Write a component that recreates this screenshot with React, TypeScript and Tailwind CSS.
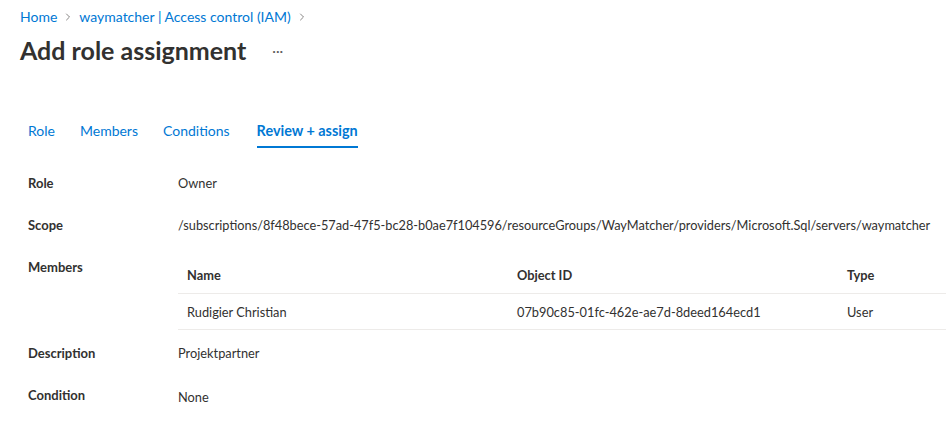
import { ChevronRight } from "lucide-react";

const font = { fontFamily: 'Lato, "Noto Sans", sans-serif' };

function Crumb({ text }: { text: string }) {
  return (
    <>
      <span className="text-[#0078d4]">{text}</span>
      <ChevronRight className="mx-[5px] h-3 w-3 text-[#605e5c]" strokeWidth={1.5} />
    </>
  );
}

function Row({ label, children, className = "" }: { label: string; children: React.ReactNode; className?: string }) {
  return (
    <div className={`flex ${className}`}>
      <div className="w-[150px] shrink-0 text-[13px] font-bold text-[#323130]">{label}</div>
      <div className="flex-1 min-w-0">{children}</div>
    </div>
  );
}

export default function App() {
  const tabs = ["Role", "Members", "Conditions", "Review + assign"];

  return (
    <div className="h-[437px] w-[946px] overflow-hidden bg-white text-[12.8px] text-[#323130]" style={font}>
      {/* Breadcrumb */}
      <div className="flex items-center pl-5 pt-[8px] text-[14px] leading-[18px]">
        <Crumb text="Home" />
        <Crumb text="waymatcher | Access control (IAM)" />
      </div>

      {/* Title */}
      <div className="flex items-center pl-5 pt-[8px]">
        <h1 className="text-[25px] font-bold leading-[32px] text-[#323130]">Add role assignment</h1>
        <span className="ml-[26px] text-[14px] text-[#605e5c]">···</span>
      </div>

      {/* Tabs */}
      <div className="mt-[55px] flex pl-[28px] text-[14px]">
        {tabs.map((t, i) => {
          const active = i === tabs.length - 1;
          return (
            <div
              key={t}
              className={`mr-[25px] border-b-2 pb-[5px] leading-[20px] text-[#0078d4] ${active ? "ml-[2px] border-[#0078d4] font-bold text-[14.4px]" : "border-transparent"}`}
            >
              {t}
            </div>
          );
        })}
      </div>

      {/* Details */}
      <div className="mt-[26px] pl-[28px] leading-[18px]">
        <Row label="Role">Owner</Row>
        <Row label="Scope" className="mt-[24px]">
          <span className="whitespace-nowrap text-[12.75px]">
            /subscriptions/8f48bece-57ad-47f5-bc28-b0ae7f104596/resourceGroups/WayMatcher/providers/Microsoft.Sql/servers/waymatcher
          </span>
        </Row>
        <Row label="Members" className="mt-[24px]">
          <div>
            <div className="flex border-b border-[#edebe9] pb-[9px] pt-[8px] font-bold">
              <div className="w-[339px] pl-[9px]">Name</div>
              <div className="w-[330px]">Object ID</div>
              <div>Type</div>
            </div>
            <div className="flex border-b border-[#edebe9] pb-[8px] pt-[9px]">
              <div className="w-[339px] pl-[9px]">Rudigier Christian</div>
              <div className="w-[330px]">07b90c85-01fc-462e-ae7d-8deed164ecd1</div>
              <div>User</div>
            </div>
          </div>
        </Row>
        <Row label="Description" className="mt-[14px]">Projektpartner</Row>
        <Row label="Condition" className="mt-[24px]">
          <div className="pt-[2px]">None</div>
        </Row>
      </div>
    </div>
  );
}
